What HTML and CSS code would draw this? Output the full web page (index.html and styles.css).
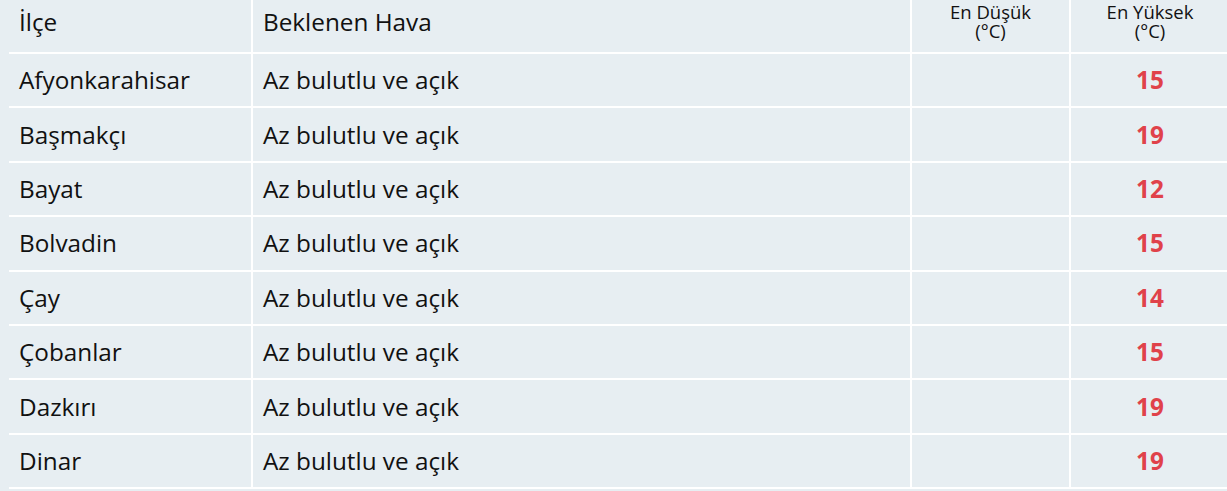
FILE: index.html
```html
<!DOCTYPE html>
<html lang="tr">
<head>
<meta charset="utf-8">
<link rel="stylesheet" href="styles.css">
</head>
<body>
<table class="weather">
  <thead>
    <tr>
      <th class="c-name">İlçe</th>
      <th class="c-desc">Beklenen Hava</th>
      <th class="c-num small">En Düşük<br>(°C)</th>
      <th class="c-num small">En Yüksek<br>(°C)</th>
    </tr>
  </thead>
  <tbody>
    <tr><td>Afyonkarahisar</td><td>Az bulutlu ve açık</td><td class="num"></td><td class="num hi">15</td></tr>
    <tr><td>Başmakçı</td><td>Az bulutlu ve açık</td><td class="num"></td><td class="num hi">19</td></tr>
    <tr><td>Bayat</td><td>Az bulutlu ve açık</td><td class="num"></td><td class="num hi">12</td></tr>
    <tr><td>Bolvadin</td><td>Az bulutlu ve açık</td><td class="num"></td><td class="num hi">15</td></tr>
    <tr><td>Çay</td><td>Az bulutlu ve açık</td><td class="num"></td><td class="num hi">14</td></tr>
    <tr><td>Çobanlar</td><td>Az bulutlu ve açık</td><td class="num"></td><td class="num hi">15</td></tr>
    <tr><td>Dazkırı</td><td>Az bulutlu ve açık</td><td class="num"></td><td class="num hi">19</td></tr>
    <tr><td>Dinar</td><td>Az bulutlu ve açık</td><td class="num"></td><td class="num hi">19</td></tr>
  </tbody>
</table>
</body>
</html>
```
FILE: styles.css
```css
html, body {
  margin: 0;
  padding: 0;
  background: #e7eef2;
}
body {
  padding: 0 0 0 9px;
  font-family: "Open Sans", "Noto Sans", sans-serif;
  color: #111;
  overflow: hidden;
}
.weather {
  border-collapse: collapse;
  table-layout: fixed;
  width: 1218px;
}
.weather th, .weather td {
  font-size: 24.3px;
  font-weight: 400;
  text-align: left;
  vertical-align: middle;
  padding: 0 10px;
  border-left: 2px solid #fff;
  border-bottom: 2px solid #fff;
}
.weather th:first-child, .weather td:first-child {
  border-left: none;
}
.weather thead th {
  height: 53px;
  padding-bottom: 8px;
  box-sizing: border-box;
  line-height: 28px;
}
.weather th.small {
  font-size: 18.5px;
  line-height: 19px;
  text-align: center;
  padding-bottom: 10px;
}
.weather tbody td {
  height: 54.4px;
  box-sizing: border-box;
  line-height: 28px;
}
.c-name { width: 243px; }
.c-desc { width: 659px; }
.c-num { width: 159px; }
.weather td.num { text-align: center; }
.weather td.hi {
  color: #e0424a;
  font-weight: 700;
}
```
